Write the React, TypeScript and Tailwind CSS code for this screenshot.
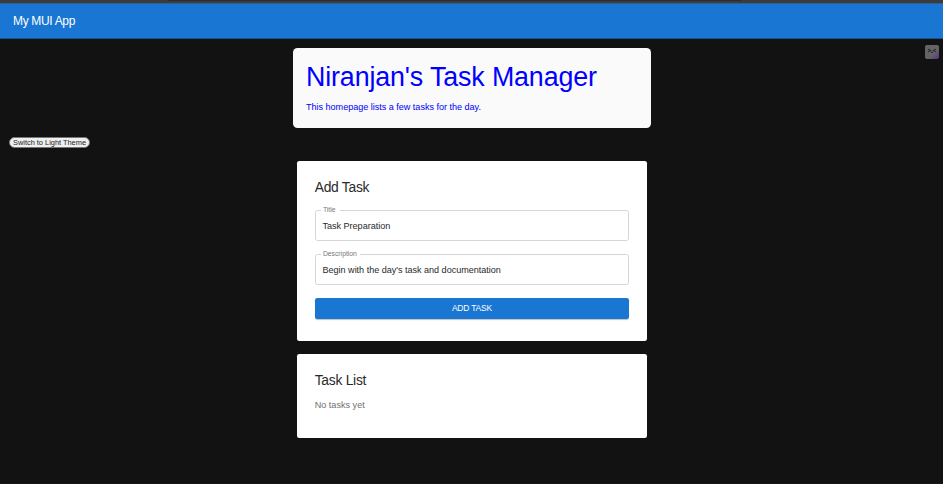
import React, { useState } from "react";

function Field({ label, value, notch }: { label: string; value: string; notch: string }) {
  const [text, setText] = useState(value);
  return (
    <label className="relative block h-[31px] rounded-[2.5px] border border-[#d6d6d6]">
      <span
        className={`absolute -top-[5px] left-[5px] h-[9px] bg-white pl-[2.2px] text-[6.8px] leading-[8px] text-[#777777] whitespace-nowrap ${notch}`}
      >
        {label}
      </span>
      <input
        className="block h-[29.6px] w-full bg-transparent pl-[6.8px] text-[9.1px] tracking-[-0.03px] text-[#2a2a2a] outline-none"
        value={text}
        onChange={(e) => setText(e.target.value)}
      />
    </label>
  );
}

export default function App() {
  return (
    <div className="relative flex h-[484px] w-[943px] flex-col overflow-hidden bg-[#121212] font-['Liberation_Sans',Arial,sans-serif]">
      <div className="h-[3px] shrink-0 bg-[#3c3c3c]">
        <div className="ml-[168px] h-px w-[573px] bg-[#2d2d30]" />
      </div>
      <header className="flex h-[36px] shrink-0 items-center border-t border-b border-t-[#2c5f94] border-b-[#16538f] bg-[#1976d2] pl-[13px]">
        <h1 className="text-[12px] leading-[16px] tracking-[-0.33px] text-white">My MUI App</h1>
      </header>

      <section className="mt-[8.5px] ml-[292.7px] h-[80.3px] w-[358.4px] shrink-0 rounded-[4.5px] bg-[#fafafa] px-[13.3px] pt-[13px] text-[#0000ff]">
        <h2 className="text-[26.8px] leading-[32px] tracking-[-0.12px] whitespace-nowrap">Niranjan&apos;s Task Manager</h2>
        <p className="mt-[8.4px] text-[9.1px] leading-[13.3px] tracking-[-0.03px]">This homepage lists a few tasks for the day.</p>
      </section>

      <button className="mt-[9px] ml-[9px] h-[11px] w-[81px] shrink-0 rounded-full border border-[#767676] bg-[#efefef] text-[7.4px] leading-[9px] whitespace-nowrap text-[#222222]">
        Switch to Light Theme
      </button>

      <main className="mt-[13px] ml-[297.2px] flex w-[349.4px] shrink-0 flex-col gap-[13.4px]">
        <section className="h-[180px] rounded-[2.3px] bg-white px-[17.5px] pt-[18px]">
          <h3 className="text-[13.8px] leading-[18px] tracking-[-0.24px] text-[#2a2a2a]">Add Task</h3>
          <div className="mt-[13px] flex flex-col gap-[13.3px]">
            <Field label="Title" value="Task Preparation" notch="w-[19px]" />
            <Field label="Description" value="Begin with the day's task and documentation" notch="w-[39px]" />
            <button className="h-[20.5px] w-full rounded-[2.3px] bg-[#1976d2] pb-px text-[8.5px] leading-[19px] tracking-[-0.22px] text-white shadow-[0_1px_1px_rgba(0,0,0,0.25)]">
              ADD TASK
            </button>
          </div>
        </section>
        <section className="h-[84px] rounded-[2.3px] bg-white px-[17.5px] pt-[18px]">
          <h3 className="text-[13.8px] leading-[18px] tracking-[-0.24px] text-[#2a2a2a]">Task List</h3>
          <p className="mt-[8.4px] text-[9.1px] leading-[13.3px] text-[#707070]">No tasks yet</p>
        </section>
      </main>

      <div className="absolute top-[45px] left-[925px] size-[14px] rounded-[2px] bg-linear-to-br from-[#626467] from-60% to-[#5a2f80]">
        <svg viewBox="0 0 14 14" className="size-full" fill="none" stroke="#25282c" strokeWidth="1.2">
          <path d="M3.2 4.2 5.4 5.5 3.2 6.8M10.8 4.2 8.6 5.5 10.8 6.8M6 7.3H8" />
        </svg>
      </div>
      <div className="absolute bottom-0 left-0 h-px w-full bg-[#1c1518]" />
    </div>
  );
}
